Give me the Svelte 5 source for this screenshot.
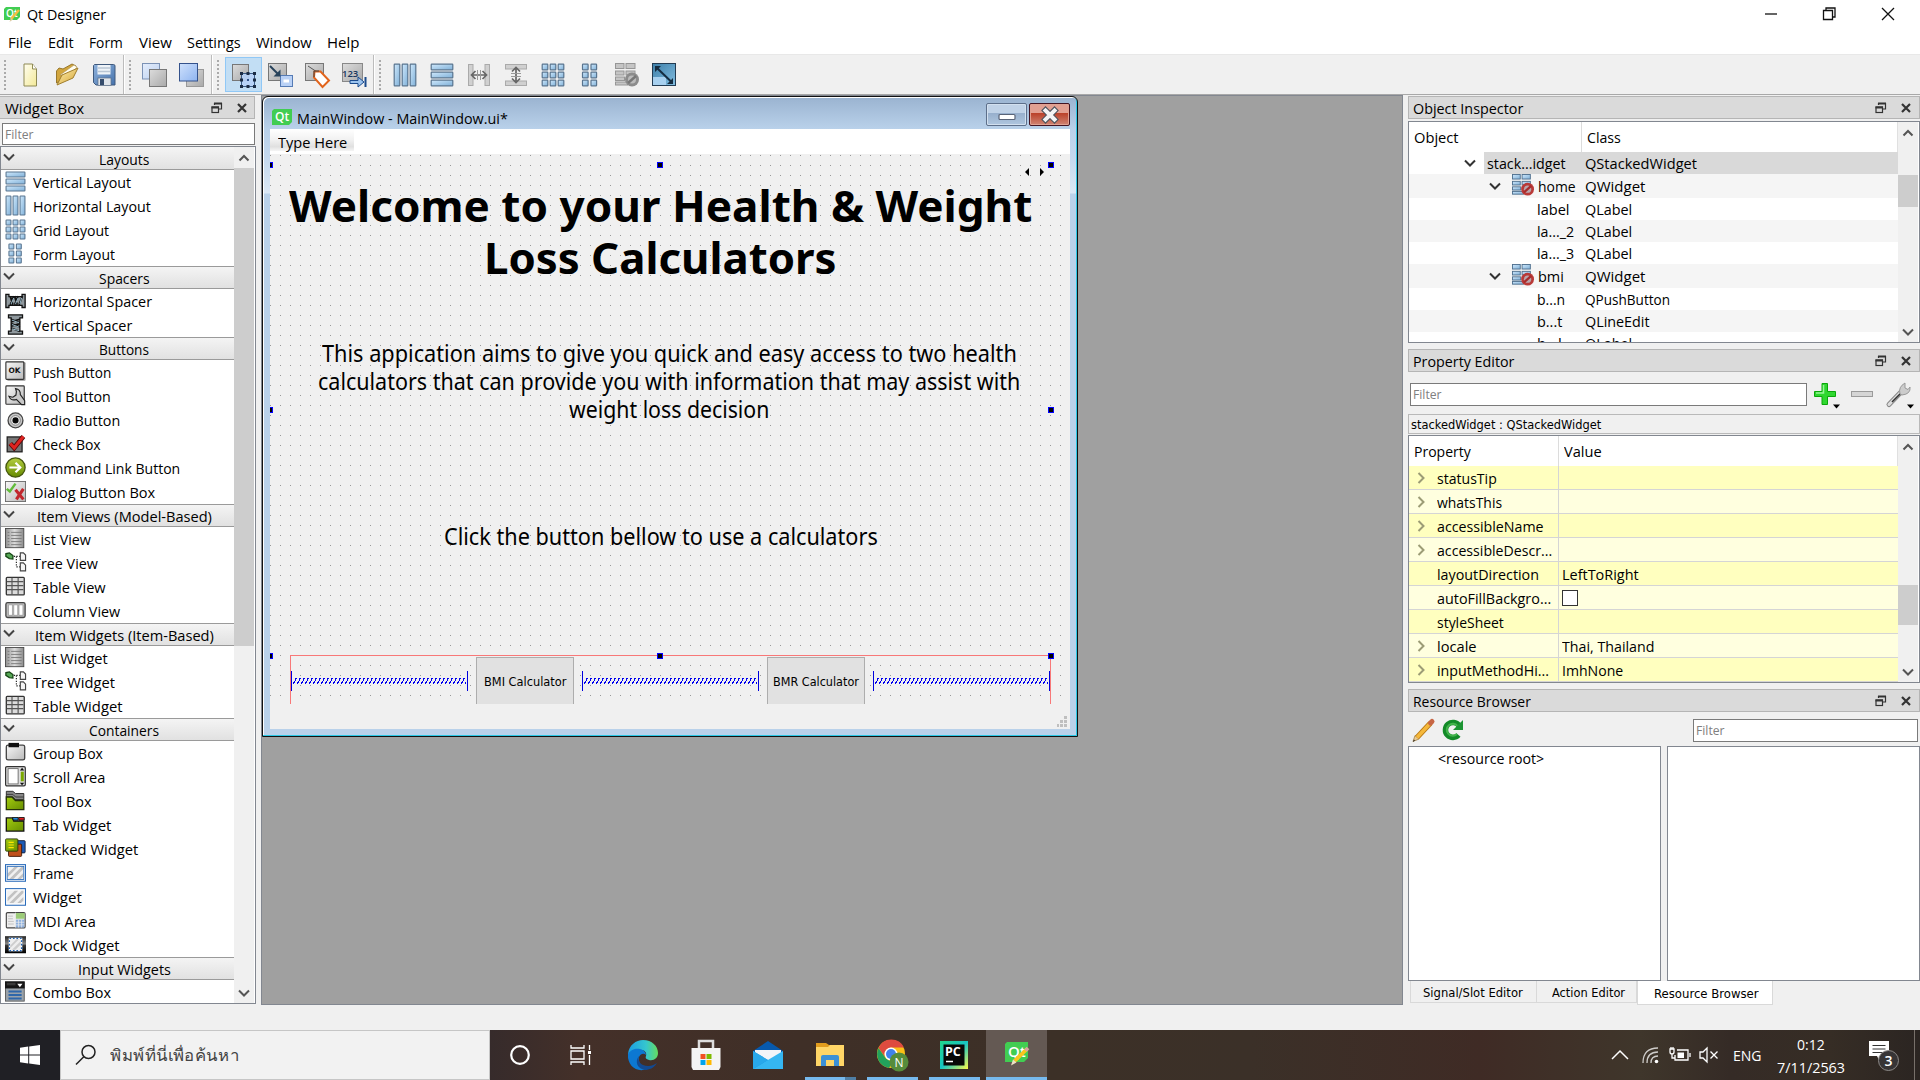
<script>
  // Squeezes or stretches a run of text to the given advance width.
  function fit(node, w) {
    const natural = node.offsetWidth;
    if (natural > 0) node.style.transform = `scaleX(${w / natural})`;
  }

  const menus = [['File', 24, 8], ['Edit', 26, 16], ['Form', 34, 15], ['View', 33, 16], ['Settings', 54, 15], ['Window', 56, 15], ['Help', 32, 15]];

  const toolGroups = [
    ['new', 'open', 'save'],
    ['back', 'front'],
    ['editwidgets', 'signals', 'buddy', 'taborder'],
    ['hlay', 'vlay', 'hsplit', 'vsplit', 'grid', 'form', 'break', 'adjust']
  ];

  const boxes = [
    { title: 'Layouts', w: 50, items: [['Vertical Layout', 98, 'vlay'], ['Horizontal Layout', 118, 'hlay'], ['Grid Layout', 76, 'grid'], ['Form Layout', 82, 'form']] },
    { title: 'Spacers', w: 51, items: [['Horizontal Spacer', 119, 'hspacer'], ['Vertical Spacer', 99, 'vspacer']] },
    { title: 'Buttons', w: 50, items: [['Push Button', 78, 'push'], ['Tool Button', 78, 'toolbtn'], ['Radio Button', 87, 'radio'], ['Check Box', 68, 'check'], ['Command Link Button', 147, 'command'], ['Dialog Button Box', 122, 'dialog']] },
    { title: 'Item Views (Model-Based)', w: 175, items: [['List View', 58, 'list'], ['Tree View', 65, 'tree'], ['Table View', 73, 'table'], ['Column View', 87, 'column']] },
    { title: 'Item Widgets (Item-Based)', w: 179, items: [['List Widget', 75, 'list'], ['Tree Widget', 82, 'tree'], ['Table Widget', 90, 'table']] },
    { title: 'Containers', w: 70, items: [['Group Box', 70, 'group'], ['Scroll Area', 72, 'scroll'], ['Tool Box', 59, 'toolbox'], ['Tab Widget', 78, 'tab'], ['Stacked Widget', 105, 'stacked'], ['Frame', 41, 'frame'], ['Widget', 49, 'widget'], ['MDI Area', 63, 'mdi'], ['Dock Widget', 87, 'dock']] },
    { title: 'Input Widgets', w: 93, items: [['Combo Box', 78, 'combo']] }
  ];

  const objects = [
    { name: 'stack...idget', nw: 79, cls: 'QStackedWidget', cw: 112, kind: 'sel' },
    { name: 'home', nw: 38, cls: 'QWidget', cw: 60, kind: 'page' },
    { name: 'label', nw: 33, cls: 'QLabel', cw: 47, kind: 'leaf' },
    { name: 'la..._2', nw: 37, cls: 'QLabel', cw: 47, kind: 'leaf' },
    { name: 'la..._3', nw: 37, cls: 'QLabel', cw: 47, kind: 'leaf' },
    { name: 'bmi', nw: 26, cls: 'QWidget', cw: 60, kind: 'page' },
    { name: 'b...n', nw: 28, cls: 'QPushButton', cw: 85, kind: 'leaf' },
    { name: 'b...t', nw: 25, cls: 'QLineEdit', cw: 65, kind: 'leaf' },
    { name: 'b...l', nw: 25, cls: 'QLabel', cw: 47, kind: 'leaf' }
  ];

  const props = [
    { n: 'statusTip', w: 60, e: true },
    { n: 'whatsThis', w: 65, e: true },
    { n: 'accessibleName', w: 107, e: true },
    { n: 'accessibleDescr...', w: 115, e: true },
    { n: 'layoutDirection', w: 102, v: 'LeftToRight', vw: 77 },
    { n: 'autoFillBackgro...', w: 114, check: true },
    { n: 'styleSheet', w: 67 },
    { n: 'locale', w: 40, e: true, v: 'Thai, Thailand', vw: 92 },
    { n: 'inputMethodHi...', w: 112, e: true, v: 'ImhNone', vw: 61 }
  ];

  const three = [0, 1, 2];
  const springX = [21, 312, 603];
  const handles = [[-3, 8], [387, 8], [778, 8], [-3, 253], [778, 253], [-3, 499], [387, 499], [778, 499]];
</script>

{#snippet t(text, w)}<span class="fit" style:width={`${w}px`}><span class="run" use:fit={w}>{text}</span></span>{/snippet}

{#snippet bar(x, y, w, h)}
  <rect {x} {y} width={w} height={h} rx=".6" fill="url(#blue)" stroke="#58748f" stroke-width="1.2" />
{/snippet}

{#snippet chev(dir, c)}
  <svg class="chev" width="12" height="12" viewBox="0 0 12 12" fill="none" stroke={c} stroke-width="2">
    {#if dir === 'down'}<path d="M1 3.5 6 8.5 11 3.5" />
    {:else if dir === 'up'}<path d="M1.5 8.5 6 4 10.5 8.5" />
    {:else}<path d="M3.5 1 8.5 6 3.5 11" />{/if}
  </svg>
{/snippet}

{#snippet icon(name, size)}
  <svg width={size} height={size} viewBox="0 0 24 24" class="ic">
    {#if name === 'vlay'}
      {#each three as i}{@render bar(1.2, 1.2 + i * 8, 21.6, 5.6)}{/each}
    {:else if name === 'hlay'}
      {#each three as i}{@render bar(1.2 + i * 8, 1.2, 5.6, 21.6)}{/each}
    {:else if name === 'grid'}
      {#each three as i}{#each three as j}{@render bar(1.2 + i * 8, 1.2 + j * 8, 5.6, 5.6)}{/each}{/each}
    {:else if name === 'form'}
      {#each [0, 1] as i}{#each three as j}{@render bar(4.5 + i * 8.5, 1.2 + j * 8, 5.6, 5.6)}{/each}{/each}
    {:else if name === 'new'}
      <path d="M6 1H14.5L18.5 6V23H6Z" fill="url(#paper)" stroke="#8f8a55" /><path d="M14.5 1V6H18.5" fill="#fff" stroke="#8f8a55" />
    {:else if name === 'open'}
      <path d="M1.5 20V8L4 5 8 6 17 1 21 3 20 8Z" fill="#d2a63e" stroke="#98772b" /><path d="M5 12 19 2 22 4 16 12Z" fill="#fffdf0" stroke="#b39a5b" stroke-width=".7" /><path d="M2 22 7 12 23 5 18 15Z" fill="url(#gold)" stroke="#a07e2d" />
    {:else if name === 'save'}
      <path d="M2.5 1.5H21.5Q23 1.5 23 3V22H4L1.5 19.5V2.5Z" fill="url(#disk)" stroke="#3f597c" /><rect x="5.5" y="2" width="13" height="9.5" fill="#eef3f8" /><path d="M6 5H18M6 8.500H18" stroke="#b9c6d4" stroke-width="1.500" /><rect x="6" y="15" width="13" height="7.5" fill="#dfe4ea" stroke="#5c6f87" stroke-width=".7" /><rect x="8" y="16" width="4" height="6" fill="#354c6c" />
    {:else if name === 'back'}
      <rect x="-.5" y=".5" width="17" height="15.5" fill="url(#pale)" stroke="#7c92b5" /><rect x="6.5" y="6.5" width="17" height="17" fill="url(#gray)" stroke="#777" />
    {:else if name === 'front'}
      <rect x="6.5" y="6.5" width="17" height="17" fill="url(#gray)" stroke="#999" /><rect x="-.5" y=".5" width="18" height="17.5" fill="url(#sky)" stroke="#34528c" />
    {:else if name === 'editwidgets'}
      <rect x=".5" y="1.5" width="16" height="16" fill="url(#gray)" stroke="#777" /><rect x="9.5" y="10.5" width="13" height="13" fill="#b7d1f7" fill-opacity=".9" stroke="#3b5b84" /><path d="M8 9h3v3H8zM14.5 9h3v3h-3zM21 9h3v3h-3zM8 15.500h3v3H8zM21 15.500h3v3h-3zM8 22h3v3H8zM14.500 22h3v3h-3zM21 22h3v3h-3z" fill="#1c2c44" /><path d="M15 16h2v2h-2z" fill="#31538a" />
    {:else if name === 'signals'}
      <rect x=".5" y=".5" width="18" height="17" fill="url(#gray)" stroke="#777" /><rect x="12.500" y="12.500" width="12" height="11" fill="#b9d1f6" stroke="#557bb5" /><path d="M15.500 18H21" stroke="#fff" stroke-width="3" /><path d="M2 3 11 12" stroke="#27425a" stroke-width="2" /><path d="M12.500 13.500V6.500L5.500 13.500Z" fill="#27425a" />
    {:else if name === 'buddy'}
      <rect x=".5" y=".5" width="18" height="17" fill="url(#gray)" stroke="#777" /><path d="M3 3 12 9" stroke="#555" /><path d="M9.500 8.500H15.500L24 17.500 17.500 24 9 14.500Z" fill="#fff" stroke="#e2641c" stroke-width="2" /><path d="M9 14V8H14" fill="none" stroke="#444" />
    {:else if name === 'taborder'}
      <rect x=".5" y=".5" width="20" height="18" fill="url(#gray)" stroke="#888" /><text x="0" y="14" class="n123">123</text><path d="M8 17.500H16V14L22 19 16 24V20.500H8Z" fill="#9cc4ef" stroke="#1b4a8c" /><path d="M23.500 14V24" stroke="#1b4a8c" stroke-width="2" />
    {:else if name === 'hsplit'}
      <rect x="1.500" y="1.500" width="4.500" height="21" fill="#d0d0d0" stroke="#aaa" /><rect x="18" y="1.500" width="4.500" height="21" fill="#d0d0d0" stroke="#aaa" /><path d="M5 12H19M8.500 8 4.500 12 8.500 16M15.500 8 19.500 12 15.500 16" fill="none" stroke="#666" stroke-width="1.700" /><path d="M10.500 7V17M13.500 7V17" stroke="#999" />
    {:else if name === 'vsplit'}
      <rect x="1.500" y="1.500" width="21" height="4.500" fill="#d0d0d0" stroke="#aaa" /><rect x="1.500" y="18" width="21" height="4.500" fill="#d0d0d0" stroke="#aaa" /><path d="M12 5V19M8 8.500 12 4.500 16 8.500M8 15.500 12 19.500 16 15.500" fill="none" stroke="#666" stroke-width="1.700" /><path d="M7 10.500H17M7 13.500H17" stroke="#999" />
    {:else if name === 'break' || name === 'nolayout'}
      <g fill={name === 'break' ? '#c5c5c5' : 'url(#blue)'} stroke={name === 'break' ? '#969696' : '#4d6e8d'}><rect x=".5" y=".5" width="8.500" height="5" /><rect x="11" y=".5" width="9" height="5" /><rect x=".5" y="8" width="8.500" height="4" /><rect x="11" y="8" width="9" height="4" /><rect x=".5" y="14" width="9" height="3.500" /><rect x=".5" y="19" width="12" height="3" /></g>
      <circle cx="17" cy="16.500" r="7" fill={name === 'break' ? '#8c8c8c' : '#b93a38'} /><circle cx="17" cy="16.500" r="4" fill={name === 'break' ? '#bbb' : '#b9a5ac'} /><path d="M13 20 21 13" stroke={name === 'break' ? '#777' : '#a72c2c'} stroke-width="2.500" />
    {:else if name === 'adjust'}
      <rect x=".5" y=".5" width="23" height="22" fill="url(#adj)" stroke="#223b52" /><path d="M1 14H14V22H1Z" fill="#a7d0ef" /><path d="M5 5 19 18.500" stroke="#152c40" stroke-width="2" /><path d="M3 3H9L3 9ZM21 21V15L15 21Z" fill="#152c40" />
    {:else if name === 'hspacer'}
      <path d="M1 5H4.500V7.500H19.500V5H23V20H19.500V17.500H4.500V20H1Z" fill="#8f989d" stroke="#111" stroke-width="1.500" /><path d="M6 17 10 7M11 17 15 7M16 17 20 7M6 7 9 17M11 7 14 17" stroke="#111" stroke-width="2" /><path d="M7 16 10 9M12 16 15 9M17 16 19 9" stroke="#a9d0e2" />
    {:else if name === 'vspacer'}
      <path d="M4 1H20V4.500H17V19.500H20V23H4V19.500H7V4.500H4Z" fill="#8f989d" stroke="#111" stroke-width="1.500" /><path d="M7 6 17 10M7 11 17 15M7 16 17 20M17 6 7 9M17 11 7 14" stroke="#111" stroke-width="2" /><path d="M8 7 16 10M8 12 16 15M8 17 16 19" stroke="#a9d0e2" />
    {:else if name === 'push'}
      <rect x="2.500" y="1.500" width="21" height="21" rx="1" fill="#999" /><rect x="1" y="1" width="20.500" height="20" rx="1" fill="url(#btn)" stroke="#333" stroke-width="1.300" /><text x="4" y="14" class="ok">OK</text>
    {:else if name === 'toolbtn'}
      <rect x="1" y="1" width="21" height="21" rx="1" fill="url(#btn)" stroke="#333" stroke-width="1.300" /><path d="M12 4Q18 5 17.500 11L22.500 18V22.500H19L13 16.500Q7 18.500 4.500 13L9 14 12.500 11.500 13 7.500Z" fill="#c8c8c8" stroke="#222" stroke-width="1.300" />
    {:else if name === 'radio'}
      <circle cx="12" cy="13" r="8.500" fill="#c6c6c6" stroke="#444" stroke-width="1.500" /><circle cx="12" cy="13" r="5.500" fill="#eee" stroke="#777" /><circle cx="12" cy="13" r="3.500" fill="#080808" />
    {:else if name === 'check'}
      <rect x="2.500" y="4.500" width="17" height="17" fill="#777" stroke="#222" stroke-width="1.500" /><path d="M6 12 10.500 17 21 4" fill="none" stroke="#590707" stroke-width="5.500" /><path d="M6 12 10.500 17 21 4" fill="none" stroke="#df2320" stroke-width="3.500" />
    {:else if name === 'command'}
      <circle cx="12" cy="12" r="11" fill="url(#green)" stroke="#46580f" stroke-width="1.500" /><path d="M5 12H17M12 6.500 17.500 12 12 17.500" fill="none" stroke="#fff" stroke-width="2.500" />
    {:else if name === 'dialog'}
      <rect x=".5" y=".5" width="23" height="23" fill="url(#btn)" stroke="#666" /><path d="M2 9 5.500 12 12 3" fill="none" stroke="#62bb3b" stroke-width="2.800" /><path d="M12 10 21 21M21 9 13 21" stroke="#c2272d" stroke-width="3.500" />
    {:else if name === 'list'}
      <rect x=".5" y=".5" width="21" height="22" fill="url(#lst)" stroke="#444" /><path d="M3 5H5M7 5H19M3 8.500H5M7 8.500H19M3 12H5M7 12H19M3 15.500H5M7 15.500H19M3 19H5M7 19H19" stroke="#777" stroke-width="1" />
    {:else if name === 'tree'}
      <path d="M1 2 5 1 9 4V8L5 7.500 1 5Z" fill="#57a956" stroke="#174716" stroke-width="1.500" /><path d="M10 5H17M13 5V17M13 17H17" fill="none" stroke="#222" stroke-width="1.300" stroke-dasharray="1.500 1.500" /><path d="M17.500 1H21L23.500 3.500V9.500H17.500ZM17.500 12.500H21L23.500 15V21.500H17.500Z" fill="#f4f4f4" stroke="#444" stroke-width="1.300" />
    {:else if name === 'table'}
      <rect x="1.500" y="1.500" width="20.500" height="20" rx="1" fill="#dcdcdc" stroke="#333" stroke-width="1.500" /><path d="M2 6.500H21M2 11H21M2 15.500H21M8 2V21M15 2V21" stroke="#555" stroke-width="1.300" />
    {:else if name === 'column'}
      <rect x="1" y="3" width="22" height="17" rx="2" fill="#bbb" stroke="#444" stroke-width="1.500" /><path d="M4 5.500H8.500V17.500H4ZM10 5.500H14.500V17.500H10ZM16 5.500H20.500V17.500H16Z" fill="#fff" stroke="#888" stroke-width=".7" />
    {:else if name === 'group'}
      <rect x="1.500" y="3.500" width="21" height="17" rx="2" fill="url(#btn)" stroke="#444" stroke-width="1.500" /><rect x="4" y="1" width="12" height="5" fill="#111" />
    {:else if name === 'scroll'}
      <rect x=".7" y=".7" width="22.500" height="22" rx="1.500" fill="#ddd" stroke="#333" stroke-width="1.400" /><rect x="3.500" y="3" width="11.500" height="17.500" fill="#fff" stroke="#666" /><rect x="18" y="6.500" width="3.500" height="11" fill="#7aa800" /><path d="M17 5 19.500 2 22 5ZM17 19 19.500 22 22 19Z" fill="#111" />
    {:else if name === 'toolbox'}
      <path d="M1.500 1.500H9L12 4H21.500V11H1.500Z" fill="#888" stroke="#222" /><path d="M1.500 5H9L12 8H21.500M1.500 8H9L12 11" stroke="#333" fill="none" /><path d="M1.500 8H8L12 12H21.500V22.500H1.500Z" fill="url(#olive)" stroke="#26330a" stroke-width="1.500" />
    {:else if name === 'tab'}
      <path d="M1.500 4.500H8.500L10 8H21.500V19.500H1.500Z" fill="url(#olive)" stroke="#111" stroke-width="1.500" /><path d="M8.500 4H15V7H9.500Z" fill="#2389d8" stroke="#111" /><path d="M15.500 4H22V7H16Z" fill="#e32020" stroke="#111" />
    {:else if name === 'stacked'}
      <rect x="10" y="3" width="13" height="14" rx="1" fill="#1c5ab6" stroke="#111d38" /><rect x="4" y="7" width="15" height="14" rx="1" fill="#c0501b" stroke="#3c1708" /><rect x=".7" y="1" width="14" height="14" rx="1" fill="url(#olive)" stroke="#26330a" /><path d="M4 5H10M4 8H10M4 11H10" stroke="#ffe600" stroke-width="1.300" />
    {:else if name === 'frame' || name === 'widget'}
      <rect x=".6" y="3" width="22.800" height="19" fill="#fff" stroke="#2b6cba" stroke-width="1.200" /><rect x="2.500" y="5" width="19" height="15" fill="#f1f1f1" /><path d="M3 13 11 5.500H15L3 17.500ZM5 19.500 19 5.500H21V8L9.500 19.500ZM14 19.500 21 12.500V16.500L18 19.500Z" fill="#c2c2c2" />
      {#if name === 'frame'}<rect x="2.500" y="5" width="19" height="15" fill="none" stroke="#2b6cba" />{/if}
    {:else if name === 'mdi'}
      <rect x="1.500" y="3" width="21.500" height="17.500" rx="1.500" fill="#eee" stroke="#444" stroke-width="1.300" /><path d="M12 3.500H22.500V10H12Z" fill="#9ccc78" /><path d="M12 11H22V20H12Z" fill="#8eb0dd" /><path d="M12 3V20M12 14H22M15.500 11V20M19 11V20M12 17H22" stroke="#eee" stroke-width=".8" /><path d="M3.500 7H9M3.500 10H9M3.500 13H10M3.500 16H10" stroke="#bbb" />
    {:else if name === 'dock'}
      <rect x="0" y="2.500" width="24" height="19.500" fill="url(#dk)" /><rect x="5" y="5" width="14" height="14" fill="#eee" stroke="#fff" stroke-width="1.500" /><path d="M6 13 13 6H16L6 16ZM8 18 18 8V12L12 18Z" fill="#ccc" /><rect x="5" y="5" width="14" height="14" fill="none" stroke="#2264b4" stroke-width="1.500" stroke-dasharray="2 2" />
    {:else if name === 'combo'}
      <rect x=".5" y="1" width="21.500" height="22" fill="#9aa2aa" stroke="#555" /><rect x="0" y=".5" width="22.500" height="8" fill="#161616" /><path d="M14 3H20L17 7Z" fill="#fff" /><path d="M2 2H12V5H2Z" fill="#3a3a3a" /><path d="M4 12H19M4 16H19M4 20H19" stroke="#2e67aa" stroke-width="2.200" />
    {/if}
  </svg>
{/snippet}

{#snippet scroll(cls)}
  <div class="scroll {cls}">
    <div class="arrow">{@render chev('up', '#555')}</div>
    <div class="track"><div class="thumb"></div></div>
    <div class="arrow">{@render chev('down', '#555')}</div>
  </div>
{/snippet}

{#snippet dockhead(title, w)}
  <header class="dockhead">
    {@render t(title, w)}
    <svg class="dockctl" width="38" height="12" viewBox="0 0 38 12" fill="none" stroke="#333">
      <path d="M3.500 3V1.500H10.500V7H8" stroke-width="1.200" /><path d="M3 1.500H11" stroke-width="2" /><rect x="1" y="5" width="6.500" height="5.500" stroke-width="1.200" /><path d="M.5 5.500H8" stroke-width="2" />
      <path d="M27 2 35 10M35 2 27 10" stroke-width="2.200" />
    </svg>
  </header>
{/snippet}

<svg class="defs" width="0" height="0">
  <defs>
    <linearGradient id="blue" x2="1" y2="1"><stop stop-color="#cfe8fb" /><stop offset="1" stop-color="#7fb0d8" /></linearGradient>
    <linearGradient id="paper" x2="1" y2="1"><stop stop-color="#fffef0" /><stop offset="1" stop-color="#f3e998" /></linearGradient>
    <linearGradient id="gold" x2="1" y2="1"><stop stop-color="#fff0ae" /><stop offset="1" stop-color="#d5a437" /></linearGradient>
    <linearGradient id="disk" x2="1" y2="1"><stop stop-color="#8fb2dc" /><stop offset="1" stop-color="#4673ad" /></linearGradient>
    <linearGradient id="gray" x2="1" y2="1"><stop stop-color="#dcdcdc" /><stop offset="1" stop-color="#a9a9a9" /></linearGradient>
    <linearGradient id="pale" x2="1" y2="1"><stop stop-color="#e5eefc" /><stop offset="1" stop-color="#bcd0ef" /></linearGradient>
    <linearGradient id="sky" x2="1" y2="1"><stop stop-color="#cfe1fc" /><stop offset="1" stop-color="#8eb4f0" /></linearGradient>
    <linearGradient id="adj" x2="1" y2="1"><stop stop-color="#3d7fa9" /><stop offset="1" stop-color="#82bde0" /></linearGradient>
    <linearGradient id="btn" x2="1" y2="1"><stop stop-color="#f8f8f8" /><stop offset="1" stop-color="#b9b9b9" /></linearGradient>
    <linearGradient id="lst" x2="1"><stop stop-color="#929292" /><stop offset=".5" stop-color="#ddd" /><stop offset="1" stop-color="#8a8a8a" /></linearGradient>
    <linearGradient id="green" x2="0" y2="1"><stop stop-color="#b5cf41" /><stop offset="1" stop-color="#658a00" /></linearGradient>
    <linearGradient id="olive" x2="1" y2="1"><stop stop-color="#a4cd10" /><stop offset="1" stop-color="#668d00" /></linearGradient>
    <linearGradient id="dk" x2="0" y2="1"><stop stop-color="#222" /><stop offset=".45" stop-color="#888" /><stop offset=".55" stop-color="#333" /><stop offset="1" stop-color="#000" /></linearGradient>
    <linearGradient id="edgeA" x2="1" y2="0"><stop stop-color="#1b9de2" /><stop offset=".6" stop-color="#35c6cf" /><stop offset="1" stop-color="#65dc5f" /></linearGradient>
    <linearGradient id="pc" x2="1" y2="1"><stop stop-color="#21d789" /><stop offset=".5" stop-color="#17c4c4" /><stop offset="1" stop-color="#fcf84a" /></linearGradient>
    <pattern id="coil" width="4" height="6" patternUnits="userSpaceOnUse"><path d="M2 0H4V1H3V3H2ZM1 3H2V5H1V6H0V4H1Z" fill="#00e" /></pattern>
  </defs>
</svg>

<div class="screen">
  <div class="titlebar">
    <svg width="17" height="17" viewBox="0 0 17 17"><path d="M2 1H16V11L13 14H0V3Z" fill="#41cd52" /><text x="2" y="11" class="qtsmall">Qt</text><path d="M7 13 15 4" stroke="#f4bd42" stroke-width="2.500" /><path d="M5.500 16 7 12 9 13.500Z" fill="#dcc9a0" /></svg>
    {@render t('Qt Designer', 79)}
    <svg class="winctl" width="134" height="14" viewBox="0 0 134 14" fill="none" stroke="#111" stroke-width="1.300">
      <path d="M1 7H13" /><path d="M59.500 3.500H68.500V12.500H59.500ZM62 3.500V1H71V10H68.500" /><path d="M118 1 130 13M130 1 118 13" />
    </svg>
  </div>
  <nav class="menubar">
    {#each menus as [name, w, gap]}<span class="menu" style:margin-left={`${gap}px`}>{@render t(name, w)}</span>{/each}
  </nav>
  <div class="toolbar">
    {#each toolGroups as group}
      <div class="group">
        <div class="grip"></div>
        {#each group as name}<div class="cell" class:on={name === 'editwidgets'}>{@render icon(name, 24)}</div>{/each}
        <div class="sep"></div>
      </div>
    {/each}
  </div>

  <main>
    <aside class="left">
      {@render dockhead('Widget Box', 79)}
      <div class="filter lf">{@render t('Filter', 29)}</div>
      <div class="boxlist">
        <div class="boxbody">
          {#each boxes as b}
            <div class="boxhead">{@render chev('down', '#444')}<div class="boxtitle">{@render t(b.title, b.w)}</div></div>
            {#each b.items as [name, w, ic]}
              <div class="boxitem">{@render icon(ic, 21)}{@render t(name, w)}</div>
            {/each}
          {/each}
        </div>
        {@render scroll('s1')}
      </div>
    </aside>

    <section class="mdi">
      <div class="win">
        <div class="wintitle">
          <svg width="20" height="16" viewBox="0 0 20 16"><path d="M2 0H20V13L17 16H0V2Z" fill="#41cd52" /><text x="3" y="12" class="qt">Qt</text></svg>
          {@render t('MainWindow - MainWindow.ui*', 211)}
          <div class="wb min"><svg width="18" height="8" viewBox="0 0 18 8"><rect x="1" y="1.500" width="16" height="5" rx="1" fill="#fff" stroke="#5a6478" stroke-width="1.200" /></svg></div>
          <div class="wb close"><svg width="20" height="18" viewBox="0 0 20 18"><path d="M5.500 4.500 14.500 13.500M14.500 4.500 5.500 13.500" stroke="#50555f" stroke-width="6.200" stroke-linecap="square" /><path d="M5.500 4.500 14.500 13.500M14.500 4.500 5.500 13.500" stroke="#f4f4f4" stroke-width="4" stroke-linecap="square" /></svg></div>
        </div>
        <div class="client">
          <div class="formmenu"><span class="typehere">{@render t('Type Here', 69)}</span></div>
          <div class="canvas">
            <div class="dots"></div>
            <div class="abs h1a">{@render t('Welcome to your Health & Weight', 743)}</div>
            <div class="abs h1b">{@render t('Loss Calculators', 353)}</div>
            <div class="abs p1">{@render t('This appication aims to give you quick and easy access to two health', 695)}</div>
            <div class="abs p2">{@render t('calculators that can provide you with information that may assist with', 702)}</div>
            <div class="abs p3">{@render t('weight loss decision', 200)}</div>
            <div class="abs p4">{@render t('Click the button bellow to use a calculators', 434)}</div>
            <div class="abs redbox"></div>
            {#each springX as x}
              <svg class="abs spring" style:left={`${x}px`} width="177" height="20" viewBox="0 0 177 20"><path d="M.5 0V20M176.500 0V20" stroke="#00d" /><svg x="2" y="7" width="173" height="6"><rect width="173" height="6" fill="url(#coil)" /></svg></svg>
            {/each}
            <div class="abs pb b1">{@render t('BMI Calculator', 82)}</div>
            <div class="abs pb b2">{@render t('BMR Calculator', 86)}</div>
            {#each handles as [x, y]}<div class="abs handle" style:left={`${x}px`} style:top={`${y}px`}></div>{/each}
            <svg class="abs cursor" width="20" height="8" viewBox="0 0 20 8"><path d="M4 0V8L0 4ZM15 0V8L19 4Z" fill="#000" /></svg>
            <svg class="abs sizegrip" width="11" height="11" viewBox="0 0 11 11" fill="#bfbfbf"><path d="M7 0h3v3h-3zM3 4h3v3h-3zM7 4h3v3h-3zM0 8h2v3h-2zM3 8h3v3h-3zM7 8h3v3h-3z" /></svg>
          </div>
        </div>
      </div>
    </section>

    <aside class="right">
      <section class="oi">
        {@render dockhead('Object Inspector', 110)}
        <div class="table otable">
          <div class="grid">
            <div class="thead"><div class="oc1">{@render t('Object', 45)}</div><div class="oc2">{@render t('Class', 34)}</div></div>
            {#each objects as o}
              <div class="orow {o.kind}">
                <div class="name">
                  {#if o.kind !== 'leaf'}{@render chev('down', '#333')}{/if}
                  {#if o.kind === 'page'}<span class="pageicon">{@render icon('nolayout', 22)}</span>{/if}
                  <span class="label">{@render t(o.name, o.nw)}</span>
                </div>
                <div class="cls">{@render t(o.cls, o.cw)}</div>
              </div>
            {/each}
          </div>
          {@render scroll('s2')}
        </div>
      </section>

      <section class="pe">
        {@render dockhead('Property Editor', 101)}
        <div class="petools">
          <div class="filter pf">{@render t('Filter', 29)}</div>
          <svg width="104" height="28" viewBox="0 0 104 28">
            <path d="M8 1.500H13.500V9.500H21.500V14.500H13.500V22.500H8V14.500H.5V9.500H8Z" fill="#2fd72f" stroke="#0aa60a" /><path d="M9.500 3V11H2" stroke="#98f598" stroke-width="1.500" fill="none" />
            <path d="M19 22.500H26L22.500 26.500ZM93 22.500H100L96.500 26.500Z" fill="#000" />
            <rect x="37.500" y="9.500" width="21" height="5" fill="#d5d5d5" stroke="#9a9a9a" />
            <path d="M75 22.500 88 9" stroke="#888" stroke-width="5" stroke-linecap="round" /><path d="M75 22.500 88 9" stroke="#ddd" stroke-width="3" stroke-linecap="round" /><path d="M78 20 87 11" stroke="#333" stroke-width="1.600" /><path d="M86 12Q84 5 91 1V6L94 7.500 96 5Q97 12 88 13Z" fill="#ccc" stroke="#999" />
          </svg>
        </div>
        <div class="objbar">{@render t('stackedWidget : QStackedWidget', 190)}</div>
        <div class="table ptable">
          <div class="grid">
            <div class="thead"><div class="pc1">{@render t('Property', 57)}</div><div class="pc2">{@render t('Value', 38)}</div></div>
            {#each props as p, i}
              <div class="prow" class:alt={i % 2 === 1}>
                <div class="pn"><span class="ex">{#if p.e}{@render chev('right', '#9c9c76')}{/if}</span>{@render t(p.n, p.w)}</div>
                <div class="pv">{#if p.v}{@render t(p.v, p.vw)}{/if}{#if p.check}<span class="cb"></span>{/if}</div>
              </div>
            {/each}
          </div>
          {@render scroll('s3')}
        </div>
      </section>

      <section class="rb">
        {@render dockhead('Resource Browser', 118)}
        <div class="rtools">
          <svg width="54" height="24" viewBox="0 0 54 24">
            <path d="M1 22.500 3 16.500 7 20Z" fill="#eacb93" stroke="#977334" stroke-width=".7" /><path d="M5 18.500 18.500 4" stroke="#b87813" stroke-width="5.500" /><path d="M5 18.500 18.500 4" stroke="#f5b83b" stroke-width="3.500" /><path d="M18.500 4 20 2.500" stroke="#c76645" stroke-width="5" stroke-linecap="round" /><path d="M.8 23 2 20.500 3 21.500Z" fill="#222" />
            <path d="M46.500 16A7.500 7.500 0 1 1 47 6.500" fill="none" stroke="#138a28" stroke-width="5.500" /><path d="M45 15A6 6 0 1 1 45.500 7" fill="none" stroke="#42b44b" stroke-width="2" /><path d="M51 1V11H41Z" fill="#1c9432" />
          </svg>
          <div class="filter rf">{@render t('Filter', 29)}</div>
        </div>
        <div class="trees"><div class="tree1">{@render t('<resource root>', 106)}</div><div class="tree2"></div></div>
        <div class="tabs">
          <div class="tab a">{@render t('Signal/Slot Editor', 100)}</div>
          <div class="tab b">{@render t('Action Editor', 73)}</div>
          <div class="tab c">{@render t('Resource Browser', 105)}</div>
        </div>
      </section>
    </aside>
  </main>

  <footer>
    <div class="start"><svg width="20" height="20" viewBox="0 0 20 20" fill="#fff"><path d="M0 2.800 8.200 1.600V9.500H0ZM9.200 1.500 20 0V9.500H9.200ZM0 10.500H8.200V18.400L0 17.200ZM9.200 10.500H20V20L9.200 18.500Z" /></svg></div>
    <div class="search">
      <svg width="22" height="22" viewBox="0 0 22 22" fill="none" stroke="#222" stroke-width="1.500"><circle cx="13.500" cy="8" r="6.500" /><path d="M8.800 12.700 1 20.500" /></svg>
      {@render t('พิมพ์ที่นี่เพื่อค้นหา', 129)}
    </div>
    <div class="task cort"><svg width="22" height="22" viewBox="0 0 22 22"><circle cx="11" cy="11" r="8.800" fill="none" stroke="#fff" stroke-width="2.200" /></svg></div>
    <div class="task tv"><svg width="22" height="20" viewBox="0 0 22 20" fill="none" stroke="#fff" stroke-width="1.300"><path d="M1 0V3H14V0M1 20V17H14V20M1 6H14V14H1ZM19.500 0V5M19.500 10V20" /><path d="M18 6H21V9H18Z" fill="#fff" stroke="none" /></svg></div>
    <div class="task"><svg width="32" height="32" viewBox="0 0 32 32"><path d="M1 15C2 6 9 1 16 1C25 1 31 7 31 14C31 19 27 22 22 21C19 20 18 19 19 17C20 14 18 11 14 11C8 11 1 14 1 21Z" fill="url(#edgeA)" /><path d="M1 15C4 10 9 9 13 10C18 11 19 15 19 16C17 14 14 14 12 18C11 23 14 29 20 30C10 34 0 27 1 15Z" fill="#0c78d2" /><path d="M12 17C10 23 15 27 21 27C25 27 28 25 30 24C27 29 22 31 18 31C11 30 7 23 12 17Z" fill="#134a91" /></svg></div>
    <div class="task"><svg width="32" height="32" viewBox="0 0 32 32"><path d="M9 9V2H23V9" fill="none" stroke="#ddd" stroke-width="2.500" /><path d="M1.500 9H30.500V28L29 31H3L1.500 28Z" fill="#f4f4f4" /><path d="M10.500 15H15.500V20H10.500Z" fill="#f25022" /><path d="M16.500 15H21.500V20H16.500Z" fill="#7fba00" /><path d="M10.500 21H15.500V26H10.500Z" fill="#00a4ef" /><path d="M16.500 21H21.500V26H16.500Z" fill="#ffb900" /></svg></div>
    <div class="task"><svg width="32" height="32" viewBox="0 0 32 32"><path d="M1 12 16 2 31 12V16H1Z" fill="#0759ad" /><path d="M3 11H29V23H3Z" fill="#f1f4f8" /><path d="M1 12 31 30H1Z" fill="#1b95e0" /><path d="M31 12 1 30H31Z" fill="#35b6f1" /><path d="M1 12 16 21 1 30Z" fill="#28a8ea" /></svg></div>
    <div class="task run1"><svg width="32" height="32" viewBox="0 0 32 32"><path d="M2 4H12L15 6H29V12H2Z" fill="#e19c1d" /><path d="M2 8H14L16 6H30V27H2Z" fill="#ffd667" /><path d="M7 27V18Q7 16 9 16H23Q25 16 25 18V27H20V21H12V27Z" fill="#3c91d6" /></svg></div>
    <div class="task run2"><svg width="34" height="34" viewBox="0 0 34 34"><circle cx="16" cy="16" r="14" fill="#fbc116" /><path d="M3.500 10A14 14 0 0 1 29 9.500H16A7 7 0 0 0 10 19Z" fill="#de4b3f" /><path d="M3.500 10 10.500 20Q14 24 18 23L14 30A14 14 0 0 1 3.500 10Z" fill="#22a15c" /><circle cx="16" cy="16" r="6.500" fill="#fff" /><circle cx="16" cy="16" r="5" fill="#4182ec" /><circle cx="24" cy="24" r="9.500" fill="#568c3b" /><text x="24" y="28.500" text-anchor="middle" class="nn">N</text></svg></div>
    <div class="task run2"><svg width="30" height="30" viewBox="0 0 30 30"><path d="M1 1H29V29H1Z" fill="url(#pc)" /><rect x="4.500" y="4.500" width="21" height="21" fill="#080808" /><text x="6" y="16" class="pct">PC</text><path d="M7 21.500H14" stroke="#fff" stroke-width="1.500" /></svg></div>
    <div class="task active"><svg width="28" height="26" viewBox="0 0 28 26"><path d="M4 1H25V17L21 21H2V3Z" fill="#41cd52" /><text x="5" y="15.500" class="qtbig">Qt</text><path d="M11.500 20 24 8" stroke="#f9c51e" stroke-width="3.800" /><path d="M22.500 9.500 25 7" stroke="#d7a4a0" stroke-width="3.800" /><path d="M8 24.500 10 18.500 13.500 21.500Z" fill="#eee0c5" /></svg></div>
    <div class="tray">
      <svg width="116" height="24" viewBox="0 0 116 24" fill="none" stroke="#fff" stroke-width="1.300">
        <path d="M1 16 9 8 17 16" stroke-width="1.500" />
        <path d="M32 20Q32 5 47 5M36 20Q36 9 47 9M40 20Q40 13 47 13" opacity=".75" /><circle cx="45.500" cy="18.500" r="1.800" fill="#fff" stroke="none" />
        <path d="M66 7H77V17H64V12M79 10V14" /><path d="M66.500 9.500H73V15H66.500Z" fill="#fff" stroke="none" /><path d="M59 6V9Q59 11 61 11 63 11 63 9V6ZM60 6V4M62 6V4M61 11V15H64" />
        <path d="M89 9H92L96 5V19L92 15H89ZM99.500 8.500 106.500 15.500M106.500 8.500 99.500 15.500" />
      </svg>
      <div class="eng">{@render t('ENG', 29)}</div>
      <div class="clock"><div>{@render t('0:12', 28)}</div><div>{@render t('7/11/2563', 68)}</div></div>
      <svg width="34" height="34" viewBox="0 0 34 34"><path d="M1 3H21V18H15L11 22 9 18H1Z" fill="#fff" /><path d="M4.500 7.500H17.500M4.500 11H17.500M4.500 14.500H17.500" stroke="#333" /><circle cx="20.500" cy="22.500" r="10" fill="#373536" stroke="#8d8a88" /><text x="20.500" y="27.500" text-anchor="middle" class="badge">3</text></svg>
      <div class="peek"></div>
    </div>
  </footer>
</div>

<style>
  :global(body) { margin: 0; overflow: hidden; }
  .screen { width: 1920px; height: 1080px; overflow: hidden; background: #f0f0f0; display: flex; flex-direction: column; font: 15px/20px 'Open Sans', 'Noto Sans', sans-serif; color: #000; }
  .screen *, .screen { box-sizing: border-box; }
  svg { display: block; flex: none; overflow: visible; }
  .defs { position: absolute; }
  .fit { display: inline-block; white-space: nowrap; flex: none; }
  .run { display: inline-block; white-space: pre; transform-origin: 0 50%; }
  text { font-family: 'Open Sans', sans-serif; fill: #fff; }
  .n123 { font-size: 9.500px; fill: #16365e; font-weight: 600; }
  .ok { font: 600 8.500px 'DejaVu Sans', sans-serif; fill: #111; }
  .qt { font-size: 12px; font-weight: 600; }
  .qtsmall { font-size: 10px; font-weight: 600; }
  .qtbig { font-size: 15px; font-weight: 600; }
  .nn { font-size: 12px; }
  .pct { font: 700 12.500px 'Open Sans', sans-serif; }
  .badge { font-size: 14px; font-weight: 600; }

  .titlebar { height: 29px; background: #fff; display: flex; align-items: center; padding: 0 0 1px 4px; gap: 6px; flex: none; }
  .winctl { margin-left: auto; margin-right: 22px; }
  .menubar { height: 26px; background: #fff; display: flex; align-items: center; border-bottom: 1px solid #e8e8e8; flex: none; }
  .menu { display: flex; }
  .toolbar { height: 40px; display: flex; border-bottom: 1px solid #a8a8a8; flex: none; }
  .group { display: flex; align-items: center; }
  .grip { width: 12px; height: 32px; background: radial-gradient(circle at 5px 2px, #aaa 1px, transparent 1.300px) 0 0 / 12px 4px; }
  .cell { width: 37px; height: 35px; display: flex; align-items: center; justify-content: center; padding-right: 1px; }
  .cell.on { background: #c2def4; border: 1px solid #90c8f6; padding: 0; }
  .sep { width: 2px; height: 39px; border-left: 1px solid #bcbcbc; background: #fff; }
  .group:last-child .sep { visibility: hidden; }

  main { height: 935px; display: flex; flex: none; }
  .left { width: 256px; height: 909px; display: flex; flex-direction: column; padding-top: 1px; }
  .dockhead { height: 23px; border: 1px solid #b5b5b5; background: #dadada; display: flex; align-items: center; justify-content: space-between; padding: 0 6px 0 4px; flex: none; }
  .left .dockhead { width: 255px; border-left: 0; padding-left: 5px; padding-right: 5px; }
  .filter { height: 23px; border: 1px solid #7a7a7a; background: #fff; color: #808080; display: flex; align-items: center; padding: 0 0 1px 2px; font-size: 13px; }
  .lf { width: 253px; height: 22px; margin: 4px 0 1px 2px; padding-bottom: 0; flex: none; }
  .boxlist { flex: 1; min-height: 0; border: 1px solid #828790; display: flex; background: #fff; }
  .boxbody { width: 233px; overflow: hidden; }
  .boxhead { height: 23px; border-top: 1px solid #9a9a9a; border-bottom: 1px solid #9a9a9a; background: linear-gradient(#f4f4f4, #e1e1e1); display: flex; align-items: center; padding-left: 2px; }
  .boxhead:first-child { border-top-color: #f4f4f4; }
  .boxtitle { flex: 1; display: flex; justify-content: center; padding-right: 1px; }
  .boxhead .chev { margin-top: -4px; }
  .boxitem { height: 24px; display: flex; align-items: center; padding-left: 4px; gap: 7px; }
  .boxitem .ic { margin-top: -2px; }

  .scroll { width: 20px; background: #f0f0f0; display: flex; flex-direction: column; margin-left: auto; flex: none; }
  .s1 { margin-right: 1px; }
  .arrow { height: 21px; display: flex; align-items: center; justify-content: center; flex: none; }
  .s1 .arrow { padding-right: 1px; }
  .track { flex: 1; display: flex; flex-direction: column; }
  .thumb { background: #cdcdcd; }
  .s1 .thumb { height: 478px; }
  .s2 .thumb { margin-top: 32px; height: 32px; }
  .s3 .thumb { margin-top: 128px; height: 40px; }

  .mdi { width: 1142px; height: 910px; margin-left: 5px; background: #a0a0a0; border: 1px solid #828790; }
  .win { width: 816px; height: 641px; border: 1px solid #111; border-radius: 6px 6px 0 0; background: linear-gradient(#9ab3d0 0, #b9d1ea 32px, #c4d8ee 60px, #dbe8f5 96px, #b9d1ea 97px); box-shadow: inset -1px -1px #2bc8e6, inset 1px 1px #fff; padding: 0 7px; }
  .wintitle { height: 32px; display: flex; padding-left: 2px; }
  .wintitle > svg { margin: 12px 5px 0 0; }
  .wintitle > .fit { margin-top: 11px; }
  .wb { width: 41px; height: 23px; margin-top: 6px; border-radius: 2px; display: flex; align-items: center; justify-content: center; }
  .min { margin-left: auto; margin-right: 2px; border: 1px solid #5d6f8a; background: linear-gradient(#c0d2e7 0 42%, #97afcc 43%, #afc6df); box-shadow: inset 0 0 0 1px #d2e0ef; }
  .min svg { margin-top: 4px; }
  .close { border: 1px solid #431422; background: linear-gradient(#e2a092 0 42%, #ba4028 43%, #d08574); box-shadow: inset 0 0 0 1px #e0a192; }
  .client { width: 800px; }
  .formmenu { height: 25px; background: #fff; }
  .typehere { display: block; width: 84px; height: 22px; padding: 3px 0 0 8px; background: linear-gradient(#fff, #f1f1f1 50%, #e0e0e0 80%, #f5f5f5); }
  .canvas { position: relative; width: 800px; height: 575px; background: #f0f0f0; overflow: hidden; font-family: 'Noto Sans', 'Open Sans', sans-serif; font-size: 23.500px; line-height: 28px; }
  .dots { height: 550px; background: linear-gradient(90deg, transparent 1px, #f0f0f0 1px) 0 0 / 10px 10px, linear-gradient(#f0f0f0 1px, #999 1px, #999 2px, #f0f0f0 2px) 0 0 / 10px 10px; }
  .abs { position: absolute; }
  .h1a, .h1b { font-size: 43.500px; line-height: 52px; font-weight: 700; }
  .h1a { left: 19px; top: 25px; }
  .h1b { left: 214px; top: 77px; }
  .p1 { left: 52px; top: 185px; }
  .p2 { left: 48px; top: 213px; }
  .p3 { left: 299px; top: 241px; }
  .p4 { left: 174px; top: 368px; }
  .redbox { left: 20px; top: 501px; width: 761px; height: 49px; border: 1px solid #f87878; border-bottom: 0; }
  .spring { top: 517px; }
  .pb { top: 503px; width: 98px; height: 47px; border: 1px solid #adadad; border-bottom: 0; background: #e1e1e1; font: 12.500px/20px 'DejaVu Sans Condensed', 'DejaVu Sans', sans-serif; display: flex; justify-content: center; padding-top: 14px; }
  .b1 { left: 206px; }
  .b2 { left: 497px; }
  .handle { width: 6px; height: 6px; border: 1px solid #00f; background: #000; }
  .cursor { left: 755px; top: 14px; }
  .sizegrip { left: 787px; top: 562px; }

  .right { width: 512px; height: 910px; margin-left: 5px; display: flex; flex-direction: column; padding-top: 1px; }
  .oi { height: 253px; display: flex; flex-direction: column; }
  .table { border: 1px solid #828790; background: #fff; display: flex; overflow: hidden; padding-right: 1px; }
  .otable { margin-top: 2px; height: 222px; }
  .grid { width: 489px; overflow: hidden; }
  .thead { height: 30px; display: flex; border-right: 1px solid #e0e0e0; }
  .oc1, .pc1 { padding: 5px 0 0 5px; border-right: 1px solid #dcdcdc; }
  .oc1 { width: 173px; }
  .pc1 { width: 150px; }
  .oc2, .pc2 { padding: 5px 0 0 5px; }
  .orow { height: 22px; display: flex; align-items: center; }
  .orow:nth-child(odd) { background: #f5f5f5; }
  .orow.sel { background: #fff; }
  .page { height: 24px; }
  .name { width: 176px; height: 100%; display: flex; align-items: center; }
  .sel .name { padding-left: 55px; gap: 8px; }
  .sel .label { background: #d9d9d9; height: 100%; flex: 1; padding: 1px 0 0 3px; }
  .sel .cls { background: #d9d9d9; height: 100%; flex: 1; padding-top: 1px; }
  .page .name { padding-left: 80px; }
  .pageicon { margin: -3px 4px 0 11px; }
  .leaf .name { padding-left: 128px; }

  .pe { height: 340px; display: flex; flex-direction: column; }
  .petools { height: 42px; display: flex; padding: 11px 0 0 2px; }
  .pf { width: 397px; margin-right: 7px; }
  .petools svg { margin-top: -1px; }
  .objbar { height: 20px; border: 1px solid #b9b9b9; font: 12.500px/20px 'DejaVu Sans Condensed', 'DejaVu Sans', sans-serif; padding-left: 2px; }
  .ptable { margin-top: 1px; height: 248px; }
  .prow { height: 24px; display: flex; background: #ffffbf; border-bottom: 1px solid #d5d5d5; }
  .prow.alt { background: #ffffdf; }
  .pn { width: 150px; border-right: 1px solid #d5d5d5; display: flex; align-items: center; }
  .ex { width: 28px; padding-left: 6px; }
  .pv { padding-left: 3px; display: flex; align-items: center; }
  .cb { width: 16px; height: 16px; border: 1px solid #333; background: #fff; }

  .rtools { height: 34px; display: flex; justify-content: space-between; padding: 7px 2px 0 4px; }
  .rf { width: 225px; }
  .trees { height: 235px; display: flex; gap: 6px; }
  .tree1, .tree2 { flex: 1; border: 1px solid #828790; background: #fff; padding: 1px 0 0 29px; }
  .tabs { display: flex; padding-left: 2px; font: 12.500px/20px 'DejaVu Sans Condensed', 'DejaVu Sans', sans-serif; }
  .tab { height: 22px; border: 1px solid #d9d9d9; border-top: 0; display: flex; justify-content: center; padding-top: 2px; }
  .a { width: 127px; padding-right: 2px; }
  .b { width: 100px; border-left: 0; padding-left: 3px; }
  .c { width: 136px; height: 24px; background: #fff; padding-top: 3px; padding-left: 2px; }

  footer { height: 50px; display: flex; flex: none; background: linear-gradient(90deg, #362b2b 490px, #443029 580px, #3f2f27 800px, #3c3027 1050px, #3b3028 1250px, #3f2b25 1480px, #3f362b 1640px, #352b26 1730px, #362d25 1830px, #2b2522); color: #fff; }
  .start { width: 60px; background: #202025; display: flex; align-items: center; justify-content: center; }
  .search { width: 430px; background: #f2f2f2; border: 1px solid #c6c6c6; color: #444; display: flex; align-items: center; padding-left: 14px; gap: 13px; font-size: 16px; }
  .task { width: 62px; display: flex; align-items: center; justify-content: center; }
  .cort { width: 60px; }
  .tv { width: 61px; }
  .tv + .task { width: 64px; }
  .run1 { background: linear-gradient(90deg, transparent 6px, #76b9ed 6px, #76b9ed 46px, #4f7fa5 46px, #4f7fa5 57px, transparent 57px) 0 100% / 100% 3px no-repeat; }
  .run2 { background: linear-gradient(90deg, transparent 6px, #76b9ed 6px, #76b9ed 57px, transparent 57px) 0 100% / 100% 3px no-repeat; }
  .active { width: 61px; margin-left: 1px; background: #645953; border-bottom: 3px solid #76b9ed; }
  .tray { margin-left: auto; display: flex; align-items: center; }
  .eng { margin-left: 6px; }
  .clock { width: 84px; margin-left: 7px; display: flex; flex-direction: column; align-items: center; gap: 3px; }
  .tray > svg:nth-of-type(2) { margin-left: 15px; }
  .peek { width: 6px; height: 50px; margin-left: 12px; border-left: 1px solid #77706a; }
</style>
